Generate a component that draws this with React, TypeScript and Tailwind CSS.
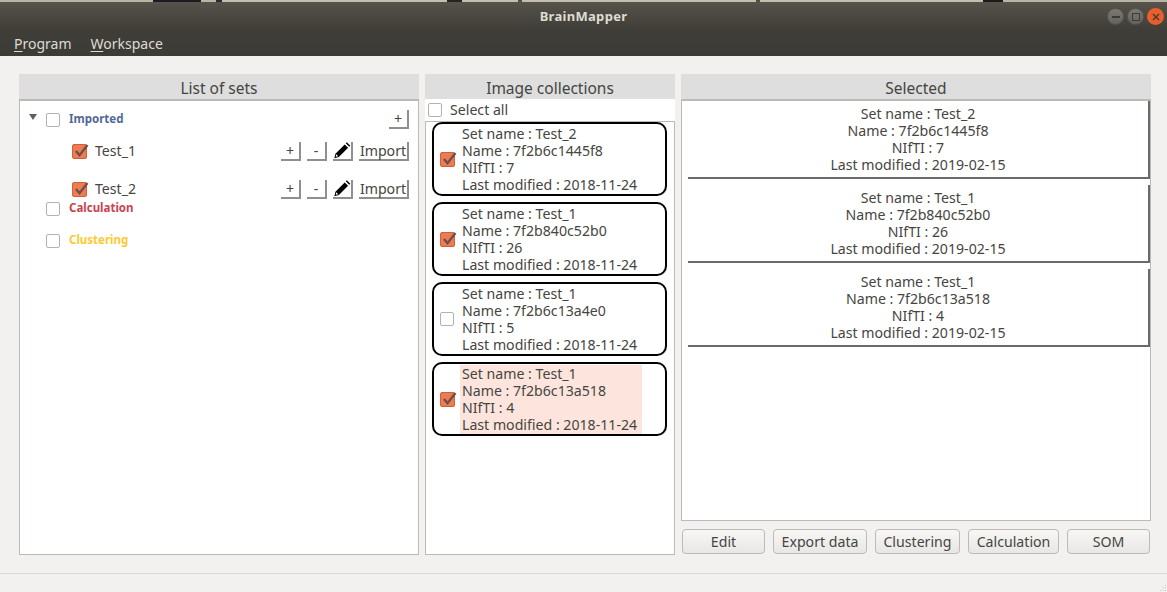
import React from 'react';

const fontStack = { fontFamily: '"Noto Sans", "Open Sans", sans-serif' };

const collections = [
  { set: 'Test_2', name: '7f2b6c1445f8', nifti: 7, checked: true, active: false },
  { set: 'Test_1', name: '7f2b840c52b0', nifti: 26, checked: true, active: false },
  { set: 'Test_1', name: '7f2b6c13a4e0', nifti: 5, checked: false, active: false },
  { set: 'Test_1', name: '7f2b6c13a518', nifti: 4, checked: true, active: true },
];

const selected = [
  { set: 'Test_2', name: '7f2b6c1445f8', nifti: 7 },
  { set: 'Test_1', name: '7f2b840c52b0', nifti: 26 },
  { set: 'Test_1', name: '7f2b6c13a518', nifti: 4 },
];

const Checkbox = ({ checked = false }: { checked?: boolean }) =>
  checked ? (
    <span className="relative block w-[15px] h-[15px] shrink-0 rounded-[2px] bg-[#ee7b52] border border-[#d0603c]">
      <svg viewBox="0 0 16 16" className="absolute -top-[2px] left-0 w-[16px] h-[16px]">
        <path d="M3 8l3.5 4.2L14.5 2" fill="none" stroke="#6b5148" strokeWidth="2.4" />
      </svg>
    </span>
  ) : (
    <span className="block w-[14px] h-[14px] shrink-0 rounded-[2px] bg-white border border-[#b5b1ab]" />
  );

const ToolButton = ({ children, width = 'w-[20px]' }: { children: React.ReactNode; width?: string }) => (
  <span className={`${width} h-[19px] flex items-center justify-center pt-[1px] bg-white border-r-2 border-b-2 border-[#8f8f8f] text-[#464541] leading-none`}>
    {children}
  </span>
);

const PencilIcon = () => (
  <svg viewBox="0 0 20 20" className="w-[19px] h-[19px] -mt-[1px]">
    <path d="M1.5 18.5l1.2-5L13 3.2l3.8 3.8L6.5 17.3z" fill="#000" />
    <path d="M14.2 2l1.2-1.2 3.8 3.8L18 5.8z" fill="#000" />
    <path d="M3.6 14.2l2.2 2.2-2.8.6z" fill="#fff" />
  </svg>
);

const RowTools = () => (
  <div className="flex gap-[6px] text-[14.15px]">
    <ToolButton>+</ToolButton>
    <ToolButton>-</ToolButton>
    <ToolButton><PencilIcon /></ToolButton>
    <ToolButton width="w-[50px]">Import</ToolButton>
  </div>
);

const PanelHeader = ({ title }: { title: string }) => (
  <div className="h-[25px] bg-[#dedede] flex items-end justify-center pb-[1px] text-[15.5px] leading-[20px] text-[#464541]">{title}</div>
);

const WindowButton = ({ children, close = false }: { children: React.ReactNode; close?: boolean }) => (
  <span className={`w-[17px] h-[17px] rounded-full flex items-center justify-center ${close ? 'bg-[#e95f2b]' : 'bg-gradient-to-b from-[#7a7972] to-[#63625c] border border-[#56554f]'}`}>
    {children}
  </span>
);

const wallpaper = [
  'w-[153px] bg-[#b9b5a6]',
  'w-[48px] bg-[#1d1b22]',
  'w-[15px] bg-[#b9b5a6]',
  'w-[6px] bg-[#2a2a35]',
  'w-[225px] bg-[#c4c0b1]',
  'w-[15px] bg-[#26241f]',
  'w-[56px] bg-[#c4c0b1]',
  'w-[4px] bg-[#5c4a3a]',
  'w-[234px] bg-[#c4c0b1]',
  'w-[4px] bg-[#5c4a3a]',
  'w-[223px] bg-[#c4c0b1]',
  'w-[20px] bg-[#1a1a1c]',
  'flex-1 bg-[#b9b5a6]',
];

export default function App() {
  return (
    <div className="w-[1167px] h-[592px] flex flex-col bg-[#f2f1f0] overflow-hidden text-[#464541]" style={fontStack}>
      <div className="h-[2px] flex">
        {wallpaper.map((cls, i) => (
          <span key={i} className={cls} />
        ))}
      </div>
      <div className="h-[54px] flex flex-col bg-gradient-to-b from-[#56534b] via-[#403e38] to-[#3c3b37]">
        <div className="relative h-[31px] flex items-center justify-center">
          <span className="mb-[2px] text-[13px] font-bold text-[#dfdbd2] tracking-[0.3px]">BrainMapper</span>
          <div className="absolute right-[3px] top-[6px] flex gap-[3px]">
            <WindowButton><span className="w-[8px] h-[2px] bg-[#3c3b37]" /></WindowButton>
            <WindowButton><span className="w-[8px] h-[8px] border border-[#3c3b37]" /></WindowButton>
            <WindowButton close>
              <svg viewBox="0 0 8 8" className="w-[8px] h-[8px]"><path d="M1 1l6 6M7 1l-6 6" stroke="#3c3b37" strokeWidth="1.4" /></svg>
            </WindowButton>
          </div>
        </div>
        <div className="flex gap-[19px] pl-[14px] pt-[1px] text-[14px] leading-[20px] text-[#dfdbd2]">
          <span><span className="underline underline-offset-2">P</span>rogram</span>
          <span><span className="underline underline-offset-2">W</span>orkspace</span>
        </div>
      </div>

      <div className="flex-1 flex gap-[6px] pl-[19px] pt-[18px]">
        {/* List of sets */}
        <div className="w-[400px] h-[481px] flex flex-col">
          <PanelHeader title="List of sets" />
          <div className="flex-1 bg-white border border-[#bdbab5] border-t-2 pt-[9px] text-[14.15px]">
            <div className="flex items-center h-[19px] pl-[9px] pr-[9px]">
              <span className="w-0 h-0 mb-[6px] border-x-[4px] border-x-transparent border-t-[6px] border-t-[#5f5f5f]" />
              <span className="ml-[9px]"><Checkbox /></span>
              <span className="ml-[9px] mb-[2px] text-[11.5px] font-bold text-[#51689b]">Imported</span>
              <span className="ml-auto"><ToolButton>+</ToolButton></span>
            </div>
            <div className="flex items-center h-[19px] mt-[13px] pl-[52px] pr-[9px]">
              <Checkbox checked />
              <span className="ml-[8px] mb-[2px]">Test_1</span>
              <span className="ml-auto"><RowTools /></span>
            </div>
            <div className="flex items-center h-[19px] mt-[19px] pl-[52px] pr-[9px]">
              <Checkbox checked />
              <span className="ml-[8px] mb-[2px]">Test_2</span>
              <span className="ml-auto"><RowTools /></span>
            </div>
            <div className="flex items-center h-[14px] mt-[3px] pl-[26px]">
              <Checkbox />
              <span className="ml-[9px] mb-[2px] text-[11.5px] font-bold text-[#c9444f]">Calculation</span>
            </div>
            <div className="flex items-center h-[14px] mt-[18px] pl-[26px]">
              <Checkbox />
              <span className="ml-[9px] mb-[2px] text-[11.5px] font-bold text-[#fdc92f]">Clustering</span>
            </div>
          </div>
        </div>

        {/* Image collections */}
        <div className="w-[250px] h-[481px] flex flex-col">
          <PanelHeader title="Image collections" />
          <div className="h-[22px] bg-white flex items-center pl-[3px] text-[14.15px]">
            <Checkbox />
            <span className="ml-[8px]">Select all</span>
          </div>
          <div className="flex-1 bg-white border border-[#bdbab5] pl-[6px] pr-[7px] flex flex-col gap-[6px] text-[14.15px] leading-[17px]">
            {collections.map((c, i) => (
              <div key={i} className="h-[74px] shrink-0 flex items-center pl-[6px] rounded-[10px] border-2 border-black">
                <Checkbox checked={c.checked} />
                <div className={`${c.checked ? 'ml-[5px]' : 'ml-[6px]'} w-[182px] h-[69px] pl-[2px] whitespace-nowrap ${c.active ? 'bg-[#fde5dd]' : ''}`}>
                  <div>Set name : {c.set}</div>
                  <div>Name : {c.name}</div>
                  <div>NIfTI : {c.nifti}</div>
                  <div>Last modified : 2018-11-24</div>
                </div>
              </div>
            ))}
          </div>
        </div>

        {/* Selected */}
        <div className="w-[470px] h-[481px] flex flex-col">
          <PanelHeader title="Selected" />
          <div className="h-[422px] bg-white border border-[#bdbab5] border-t-2 pl-[6px] text-[14.15px] leading-[17px]">
            {selected.map((s, i) => (
              <div key={i} className={`w-[462px] h-[78px] flex flex-col items-center justify-center border-r-2 border-b-2 border-[#6a6a6a] ${i > 0 ? 'mt-[6px]' : ''}`}>
                <div>Set name : {s.set}</div>
                <div>Name : {s.name}</div>
                <div>NIfTI : {s.nifti}</div>
                <div>Last modified : 2019-02-15</div>
              </div>
            ))}
          </div>
          <div className="flex justify-between px-[1px] mt-[8px] text-[14.15px]">
            {[
              ['Edit', 'w-[83px]'],
              ['Export data', 'w-[94px]'],
              ['Clustering', 'w-[85px]'],
              ['Calculation', 'w-[91px]'],
              ['SOM', 'w-[83px]'],
            ].map(([label, width]) => (
              <button key={label} className={`${width} h-[25px] pt-[1px] rounded-[4px] border border-[#bdbab5] bg-gradient-to-b from-[#f8f7f6] to-[#e9e7e5] text-[#464541] leading-none`}>
                {label}
              </button>
            ))}
          </div>
        </div>
      </div>

      <div className="h-[19px] border-t border-[#d9d7d4] flex justify-end items-end">
        <svg viewBox="0 0 8 8" className="w-[8px] h-[8px]">
          <path d="M6 1h1v1H6zM3.5 3.5h1v1h-1zM6 3.5h1v1H6zM1 6h1v1H1zM3.5 6h1v1h-1zM6 6h1v1H6z" fill="#c9c7c3" />
        </svg>
      </div>
    </div>
  );
}
